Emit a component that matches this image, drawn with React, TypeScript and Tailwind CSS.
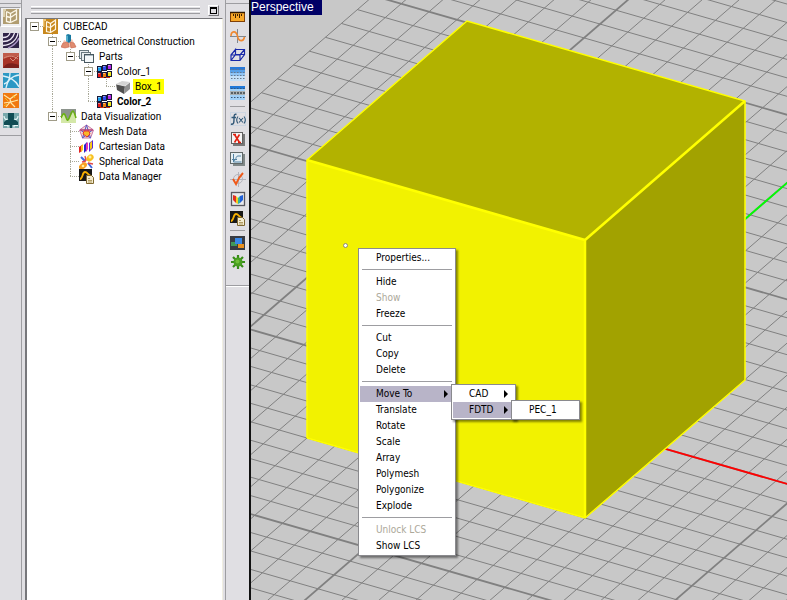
import { Fragment, type ReactNode } from 'react'
import clsx from 'clsx'

interface IconProps {
  children: ReactNode
}

function Icon({ children }: IconProps) {
  return (
    <svg className="h-4 w-4 shrink-0" viewBox="0 0 16 16" fill="none" aria-hidden="true">
      {children}
    </svg>
  )
}

/* ---------- tree icons ---------- */

const ProjectIcon = () => (
  <Icon>
    <rect x="0" y="0" width="15" height="15" fill="#c8881c" />
    <path d="M0 0h3v2H1.500v6H0z" fill="#f0c878" />
    <path d="M3.500 2.500v10l4 1M3.500 2.500l4 2 5-3.500v9.500l-5 3M3.500 7.500l4 1M7.500 4.500v9M7.500 8.500l5-4" stroke="#fff8e8" strokeWidth="1.200" />
  </Icon>
)

const GeometryIcon = () => (
  <Icon>
    <path d="M0 13l3-7 4 2 4-3 4 8-4 1-4-1-4 1z" fill="#f4c4b0" />
    <path d="M0 13l2-4 5-1 1 5-4 1zM9 8l4 1 2 4-5 1z" fill="#e08c70" stroke="#c86850" strokeWidth=".6" />
    <path d="M5 1l2-1 3 1v6L8 9 5 7z" fill="#1878a0" />
    <path d="M5 1l2 1v6L5 7z" fill="#58b0cc" />
  </Icon>
)

const PartsIcon = () => (
  <Icon>
    <rect x=".5" y="1.500" width="9" height="8" fill="#e8eef0" stroke="#68787f" />
    <rect x="2.500" y="3.500" width="9" height="8" fill="#e8eef0" stroke="#68787f" />
    <rect x="5.500" y="5.500" width="9" height="8" fill="#f4f8fa" stroke="#485860" />
    <path d="M6 6.500h8" stroke="#a8b8c0" />
  </Icon>
)

const CUBES = [
  { x: 0, y: 2, color: '#18a0f0' },
  { x: 5, y: 1, color: '#3048f0' },
  { x: 10, y: 0, color: '#b828e8' },
  { x: 0, y: 8, color: '#e81818' },
  { x: 5, y: 8, color: '#f08010' },
  { x: 10, y: 7, color: '#f0e818' },
]

const ColorIcon = () => (
  <Icon>
    {CUBES.map(c => (
      <Fragment key={`${c.x}-${c.y}`}>
        <rect x={c.x} y={c.y} width="5" height="6" fill="#181838" />
        <path d={`M${c.x + 1} ${c.y + 1}h3v4h-3z`} fill={c.color} />
        <path d={`M${c.x + 1} ${c.y + 1}h2v1h-2z`} fill="#fff" fillOpacity=".45" />
      </Fragment>
    ))}
    <path d="M3 13h4v1H3zM9 13h4v1H9z" fill="#c83010" />
  </Icon>
)

const BoxIcon = () => (
  <Icon>
    <path d="M1 5l6-3 8 1-5 4z" fill="#d4d4d4" />
    <path d="M1 5l9 2-1 8-7-4z" fill="#505050" />
    <path d="M10 7l5-4v7l-6 5z" fill="#909090" />
    <path d="M1 5l9 2 5-4" stroke="#f0f0f0" strokeWidth=".8" />
  </Icon>
)

const VisualizationIcon = () => (
  <Icon>
    <rect width="15" height="14" fill="#8c948c" />
    <path d="M0 14V7l3-3 4 7 5-8 3 4v7z" fill="#d4e8a8" />
    <path d="M0 9c2-5 3-5 4-3s2 6 3 5c2-2 3-9 5-9 1 0 2 4 3 7" stroke="#68b010" strokeWidth="1.600" />
  </Icon>
)

const MeshIcon = () => (
  <Icon>
    <path d="M7.500 1l7 5-3 8h-8l-3-8z" fill="#f8dcd4" stroke="#c878a8" />
    <path d="M7.500 1l-4 13 10-8h-12l10 8z" stroke="#5058c8" />
    <path d="M5 7h5l1 3-3 3-4-3z" fill="#f8b828" stroke="#e03030" />
    <path d="M1 6h13" stroke="#e03050" />
  </Icon>
)

const CartesianIcon = () => (
  <Icon>
    <path d="M0 8l3-2v6l-3 2z" fill="#e02020" />
    <path d="M2 7l2-2v6l-2 2z" fill="#f8c818" />
    <path d="M5 6l3-3v8l-3 3z" fill="#2828c8" />
    <path d="M7 5l2-2v7l-2 3z" fill="#e838b0" />
    <path d="M10 4l4-3v8l-4 4z" fill="#5828d8" />
    <path d="M11 4l2-2v7l-2 2z" fill="#f8c818" />
  </Icon>
)

const SphericalIcon = () => (
  <Icon>
    <ellipse cx="11" cy="4" rx="4" ry="3" transform="rotate(-40 11 4)" fill="#f8c020" />
    <ellipse cx="4" cy="12" rx="4.500" ry="2.800" transform="rotate(-35 4 12)" fill="#f8a020" />
    <path d="M2 3l4 4M9 9l4 5" stroke="#4068e0" strokeWidth="2" />
    <path d="M3 8l4-1M9 9l5 1M6 2l1 5" stroke="#e04848" strokeWidth="1.300" />
    <circle cx="11" cy="3" r="1.500" fill="#fff0a0" />
    <circle cx="4" cy="12" r="1.300" fill="#fff0a0" />
  </Icon>
)

const DataManagerIcon = () => (
  <Icon>
    <rect width="13" height="12" fill="#181818" />
    <path d="M1 10c3 0 2-7 5-7s2 3 6 4" stroke="#f8b000" strokeWidth="1.800" />
    <path d="M7.500 6.500h5l2 2v6h-7z" fill="#f4ecd0" stroke="#806830" />
    <path d="M9 9.500h2M9 11.500h4M9 13h4" stroke="#a08848" strokeWidth=".8" />
  </Icon>
)

/* ---------- module bar icons ---------- */

const CubeModuleIcon = () => (
  <Icon>
    <rect width="16" height="15" fill="#b09c70" />
    <path d="M0 0h3v2H2v6H0z" fill="#dcd0b0" />
    <path d="M3.500 2.500v10l4 1M3.500 2.500l4 2 6-3.500v9.500l-6 3M3.500 7.500l4 1M7.500 4.500v9M7.500 8.500l6-4" stroke="#fbf7ea" strokeWidth="1.300" />
  </Icon>
)

const WaveModuleIcon = () => (
  <Icon>
    <rect width="16" height="15" fill="#302448" />
    <path d="M0 4.500c3 0 6-1.500 7-4.500M0 8.500c6 0 10-3 11.500-8.500M0 12.500C8 12 14 7 15 0" stroke="#ece6f4" strokeWidth="1.300" />
    <path d="M5 15c5-2 9-5 11-10" stroke="#a894c4" strokeWidth="1.500" />
  </Icon>
)

const RedModuleIcon = () => (
  <Icon>
    <rect width="16" height="15" fill="#a83428" />
    <path d="M0 0h16v4L9 3 0 6z" fill="#c05c4c" />
    <path d="M1 5c5-3 10-2 14 1M7 5l3 3 5-5" stroke="#d88c7c" />
    <path d="M0 15c3-5 7-6 16-3v3z" fill="#7c201c" />
  </Icon>
)

const BlueModuleIcon = () => (
  <Icon>
    <rect width="16" height="15" fill="#2c98c4" />
    <path d="M0 3c8 1 13 5 16 11M3 15C4 8 9 3 16 2M1 11c4-1 6-5 6-11" stroke="#dcf2fa" strokeWidth="1.300" />
  </Icon>
)

const OrangeModuleIcon = () => (
  <Icon>
    <rect width="16" height="15" fill="#f07810" />
    <path d="M1 2l6 4 1 4 4 4M7 6l7-5M8 9l7-2M1 10l6-1-4 5" stroke="#ffe8a8" strokeWidth="1.200" />
    <path d="M2 5l3 3M10 2l2 3M1 13l3-2" stroke="#f8c020" />
  </Icon>
)

const TealModuleIcon = () => (
  <Icon>
    <rect width="16" height="15" fill="#78a8ac" />
    <path d="M5 0h6v6l4 3v3H1V9l4-3z" fill="#104c54" />
    <path d="M1 3c0 3 2 4 4 3M15 3c0 3-2 4-4 3M1 12.500h4v2M15 12.500h-4v2" stroke="#e8f8f8" strokeWidth="1.200" />
    <path d="M7 11h2v4H7z" fill="#104c54" />
  </Icon>
)

/* ---------- view bar icons ---------- */

const RulerIcon = () => (
  <Icon>
    <rect x=".5" y="3.500" width="14" height="9" fill="#f8a828" stroke="#804008" />
    <path d="M0 3.500h15" stroke="#301800" strokeWidth="1.500" />
    <path d="M3.500 5v2M5.500 5v4M7.500 5v2M9.500 5v4M11.500 5v2" stroke="#402000" />
  </Icon>
)

const CurveIcon = () => (
  <Icon>
    <path d="M0 8.500h16M7.500 1v14" stroke="#808890" />
    <path d="M1 8c0-5 5-6 6.500 0 1 6 6 6 7 1" stroke="#f08830" strokeWidth="1.600" />
  </Icon>
)

const WireBoxIcon = () => (
  <Icon>
    <path d="M1 8h9v5.500H1zM5.500 2.500h9v5L10 13.500M1 8l4.500-5.500v5L1 13.500M10 8l4.500-5.500M5.500 7.500h9" stroke="#1828a8" strokeWidth="1.200" />
  </Icon>
)

const GridIcon = () => (
  <Icon>
    <rect y="1" width="15" height="14" fill="#c4e0f8" />
    <rect y="1" width="15" height="3" fill="#2878d8" />
    <rect y="4" width="15" height="3" fill="#58a0e8" />
    <rect y="7" width="15" height="3" fill="#90c4f4" />
    <path d="M1 3.500h14M1 6.500h14M1 9.500h14M1 12.500h14" stroke="#68788c" strokeDasharray="1.500 1.500" />
  </Icon>
)

const GridRowIcon = () => (
  <Icon>
    <rect y="1" width="15" height="14" fill="#a0d0f8" />
    <rect y="1" width="15" height="3" fill="#2078d8" />
    <path d="M1 3.500h14M1 12.500h14" stroke="#385878" strokeDasharray="1.500 1.500" />
    <rect y="6" width="15" height="4" fill="#a8b0b4" />
    <path d="M1 8h14" stroke="#586064" strokeWidth="2" strokeDasharray="2 1" />
  </Icon>
)

const FunctionIcon = () => (
  <Icon>
    <rect x=".5" y="1.500" width="15" height="13" stroke="#b8cce0" strokeDasharray="1 1" />
    <path d="M6.500 3.500C4 2.500 4 5 4 8s0 6-3 5M1.500 6.500h4.500" stroke="#305878" strokeWidth="1.400" />
    <path d="M8 5.500c-1.500 2-1.500 5 0 7M14 5.500c1.500 2 1.500 5 0 7M9 7l4 4.500M13 7l-4 4.500" stroke="#305878" strokeWidth="1.100" />
  </Icon>
)

const VariableIcon = () => (
  <Icon>
    <path d="M3 3h12v12H3z" fill="#787878" />
    <rect x="1.500" y="1.500" width="11" height="11" fill="#f4f4f4" stroke="#606060" />
    <path d="M4.500 3.500l5 8M9.500 3.500l-5 8M3 3.500h3M8 11.500h3" stroke="#e02010" strokeWidth="1.600" />
  </Icon>
)

const PlotIcon = () => (
  <Icon>
    <path d="M3 3h12v12H3z" fill="#808888" />
    <rect x=".5" y="1.500" width="12" height="11" fill="#e4eef4" stroke="#606868" />
    <path d="M3.500 3v8h8M3 10c4 0 2-5 5-5h3M2 8.500h5" stroke="#5080a0" />
  </Icon>
)

const CheckIcon = () => (
  <Icon>
    <circle cx="8" cy="8" r="4.500" stroke="#b4b4bc" />
    <path d="M0 8.500h16M8.500 1v15" stroke="#b4b4bc" />
    <path d="M3 8l3 5c2-5 4-8 7-11" stroke="#f05818" strokeWidth="2" />
  </Icon>
)

const SurfaceIcon = () => (
  <Icon>
    <rect x="1.500" y="1.500" width="13" height="13" fill="#e8e8ec" stroke="#585860" strokeWidth="1.300" />
    <path d="M3 4l3 1v7l-3-3z" fill="#e03020" />
    <path d="M6 5l2 2v6l-2-1z" fill="#f0d020" />
    <path d="M8 7l2-2v7l-2 1z" fill="#30b0a0" />
    <path d="M10 5l3-1v5l-3 3z" fill="#2060d8" />
  </Icon>
)

const LayersIcon = () => (
  <Icon>
    <rect x="0" y="1" width="15" height="14" fill="#383c44" />
    <rect x="1" y="7" width="6" height="4" fill="#409858" />
    <rect x="5" y="3" width="7" height="6" fill="#3888e8" />
    <rect x="8" y="9" width="6" height="4" fill="#e89020" />
  </Icon>
)

const BurstIcon = () => (
  <Icon>
    <path d="M8 1v14M1 8h14M3 3l10 10M13 3L3 13" stroke="#388c18" strokeWidth="2.200" />
    <circle cx="8" cy="8" r="4.500" fill="#48a020" />
    <circle cx="7.500" cy="7.500" r="2" fill="#70c038" />
  </Icon>
)

/* ---------- toolbars ---------- */

interface Tool {
  label: string
  icon: ReactNode
}

const MODULES: Tool[] = [
  { label: 'Wave module', icon: <WaveModuleIcon /> },
  { label: 'Illumination module', icon: <RedModuleIcon /> },
  { label: 'Field module', icon: <BlueModuleIcon /> },
  { label: 'Propagation module', icon: <OrangeModuleIcon /> },
  { label: 'Planar module', icon: <TealModuleIcon /> },
]

const VIEW_TOOLS: Tool[] = [
  { label: 'Measure', icon: <RulerIcon /> },
  { label: 'Curve', icon: <CurveIcon /> },
  { label: 'Wireframe', icon: <WireBoxIcon /> },
  { label: 'Grid', icon: <GridIcon /> },
  { label: 'Grid rows', icon: <GridRowIcon /> },
]

const DATA_TOOLS: Tool[] = [
  { label: 'Functions', icon: <FunctionIcon /> },
  { label: 'Variables', icon: <VariableIcon /> },
  { label: 'Plots', icon: <PlotIcon /> },
  { label: 'Validate', icon: <CheckIcon /> },
  { label: 'Surface', icon: <SurfaceIcon /> },
  { label: 'Data manager', icon: <DataManagerIcon /> },
]

const EXTRA_TOOLS: Tool[] = [
  { label: 'Layers', icon: <LayersIcon /> },
  { label: 'Simulate', icon: <BurstIcon /> },
]

function ToolGroup({ tools, tall }: { tools: Tool[]; tall?: boolean }) {
  return (
    <>
      {tools.map(tool => (
        <button
          key={tool.label}
          aria-label={tool.label}
          className={clsx('flex w-full items-center justify-center', tall ? 'h-5' : 'h-[19px]')}
        >
          {tool.icon}
        </button>
      ))}
    </>
  )
}

function ModuleBar() {
  return (
    <div className="flex w-[22px] shrink-0 flex-col border-r border-[#9d9da1] bg-[#e0dfe3]">
      <div className="flex flex-col border-b border-[#9d9da1] pb-1">
        <div className="mt-[3px] mb-[3px] h-px bg-[#9d9da1]" />
        <button
          aria-label="CAD module"
          className="flex h-5 w-full items-center justify-center border border-[#9d9da1] border-r-white border-b-white bg-[#efeff1]"
        >
          <CubeModuleIcon />
        </button>
        <div className="h-1" />
        <ToolGroup tools={MODULES} tall />
      </div>
    </div>
  )
}

function ViewBar() {
  return (
    <div className="flex w-7 shrink-0 flex-col border-r-2 border-[#111] bg-[#e0dfe3] pl-0.5">
      <div className="flex grow flex-col border-l border-[#9d9da1]">
        <div className="mt-[3px] mb-[3px] h-px bg-[#9d9da1]" />
        <ToolGroup tools={VIEW_TOOLS} />
        <div className="mx-1 mt-1 mb-0.5 h-px bg-[#9d9da1]" />
        <ToolGroup tools={DATA_TOOLS} tall />
        <div className="mx-1 mt-px mb-0.5 h-px bg-[#9d9da1]" />
        <ToolGroup tools={EXTRA_TOOLS} />
        <div className="mt-3.5 h-0.5 border-t border-b border-t-[#9d9da1] border-b-white" />
      </div>
    </div>
  )
}

/* ---------- project tree ---------- */

interface TreeRow {
  label: string
  // one letter per column: n = empty, l = line, t = tee, e = end, upper case = with expander, R = root
  guides: string
  icon: ReactNode
  bold?: boolean
  selected?: boolean
}

const ROWS: TreeRow[] = [
  { label: 'CUBECAD', guides: 'R', icon: <ProjectIcon /> },
  { label: 'Geometrical Construction', guides: 'nT', icon: <GeometryIcon /> },
  { label: 'Parts', guides: 'nlE', icon: <PartsIcon /> },
  { label: 'Color_1', guides: 'nlnT', icon: <ColorIcon /> },
  { label: 'Box_1', guides: 'nlnle', icon: <BoxIcon />, selected: true },
  { label: 'Color_2', guides: 'nlne', icon: <ColorIcon />, bold: true },
  { label: 'Data Visualization', guides: 'nE', icon: <VisualizationIcon /> },
  { label: 'Mesh Data', guides: 'nnt', icon: <MeshIcon /> },
  { label: 'Cartesian Data', guides: 'nnt', icon: <CartesianIcon /> },
  { label: 'Spherical Data', guides: 'nnt', icon: <SphericalIcon /> },
  { label: 'Data Manager', guides: 'nne', icon: <DataManagerIcon /> },
]

function Guide({ kind, first, label }: { kind: string; first: boolean; label: string }) {
  const expander = kind === kind.toUpperCase()
  const k = kind.toLowerCase()
  const drawing = (
    <svg
      className={clsx('block h-[15px]', first ? 'w-4' : 'w-[18px]')}
      viewBox={first ? '2 0 16 15' : '0 0 18 15'}
      fill="none"
      aria-hidden="true"
    >
      <g stroke="#a8a898" strokeDasharray="1 1">
        {(k === 'l' || k === 't') && <path d="M9.500 0v15" />}
        {k === 'e' && <path d="M9.500 0v8" />}
        {k !== 'l' && k !== 'n' && <path d="M9 7.500h9" />}
      </g>
      {expander && (
        <>
          <rect x="5.500" y="3.500" width="8" height="8" fill="#fff" stroke="#a09c88" />
          <path d="M7 7.500h5" stroke="#000" />
        </>
      )}
    </svg>
  )
  if (!expander) return drawing
  return <button aria-label={`Collapse ${label}`}>{drawing}</button>
}

function ProjectPanel() {
  return (
    <div className="flex w-[201px] shrink-0 flex-col bg-[#e0dfe3] pl-[3px]">
      <div className="flex h-[18px] items-center gap-2 pt-0.5 pr-1 pl-1.5">
        <div className="flex grow flex-col gap-0.5">
          <div className="h-[3px] border-t border-b border-t-white border-b-[#9d9da1]" />
          <div className="h-[3px] border-t border-b border-t-white border-b-[#9d9da1]" />
        </div>
        <button
          aria-label="Float panel"
          className="flex h-[11px] w-[11px] items-center justify-center border border-white border-r-[#77777b] border-b-[#77777b]"
        >
          <span className="h-[7px] w-[7px] border border-t-2 border-black" />
        </button>
      </div>
      <ul className="grow border-t border-r border-l-2 border-t-[#77777b] border-r-[#f1efe2] border-l-[#77777b] bg-white">
        {ROWS.map(row => (
          <li key={row.label} className="flex h-[15px] items-center">
            {row.guides.split('').map((kind, i) => (
              <Guide key={i} kind={kind} first={i === 0} label={row.label} />
            ))}
            {row.icon}
            <button
              className={clsx(
                "ml-0.5 h-[15px] px-0.5 font-['Roboto',sans-serif] text-[10px] leading-[15px] whitespace-nowrap",
                row.bold && 'font-bold',
                row.selected && 'bg-[#ffff00]'
              )}
            >
              {row.label}
            </button>
          </li>
        ))}
      </ul>
    </div>
  )
}

/* ---------- 3D viewport ---------- */

// front bottom corner of the cube and the two floor directions, one grid cell each
const CORNER = { x: 334, y: 518 }
const CELL_A = { x: 27.8, y: 8 }
const CELL_B = { x: 16, y: -13.85 }

function floor(a: number, b: number) {
  return {
    x: CORNER.x + a * CELL_A.x + b * CELL_B.x,
    y: CORNER.y + a * CELL_A.y + b * CELL_B.y,
  }
}

function segment(a1: number, b1: number, a2: number, b2: number) {
  const p = floor(a1, b1)
  const q = floor(a2, b2)
  return `M${p.x} ${p.y}L${q.x} ${q.y}`
}

const range = (from: number, to: number) => Array.from({ length: to - from + 1 }, (_, i) => from + i)
const isMajor = (i: number) => (i + 5) % 10 === 0

function Scene() {
  const alongA = range(-40, 70)
  const alongB = range(-22, 60)
  return (
    <svg className="absolute inset-0 h-full w-full" fill="none" role="img" aria-label="Cube on a grid">
      <g stroke="#808080">
        {alongA.map(b => (
          <path key={`a${b}`} d={segment(-22, b, 60, b)} strokeWidth={isMajor(b) ? 1.8 : 1} />
        ))}
        {alongB.map(a => (
          <path key={`b${a}`} d={segment(a, -40, a, 70)} strokeWidth={isMajor(a) ? 1.8 : 1} />
        ))}
      </g>
      <path d={segment(-5, 5, 60, 5)} stroke="#ff0000" strokeWidth="1.800" />
      <path d={segment(-5, 5, -5, 70)} stroke="#00ff00" strokeWidth="1.800" />
      <path d="M56 160L334 240V518L56 438z" fill="#f2f200" />
      <path d="M56 160L216 21L494 101L334 240z" fill="#b2b200" />
      <path d="M334 240L494 101V380L334 518z" fill="#a2a200" />
      <path d="M56 438V160L216 21L494 101V380L334 518L56 438" stroke="#ffff00" strokeWidth="1.500" />
      <path d="M56 160L334 240L494 101M334 240V518" stroke="#ffff00" strokeWidth="2.500" />
      <circle cx="94.500" cy="245.500" r="2" fill="#fff" stroke="#8c8c70" />
    </svg>
  )
}

/* ---------- context menu ---------- */

interface MenuEntry {
  label: string
  disabled?: boolean
  active?: boolean
  submenu?: boolean
}

const MENU: MenuEntry[][] = [
  [{ label: 'Properties...' }],
  [{ label: 'Hide' }, { label: 'Show', disabled: true }, { label: 'Freeze' }],
  [{ label: 'Cut' }, { label: 'Copy' }, { label: 'Delete' }],
  [
    { label: 'Move To', active: true, submenu: true },
    { label: 'Translate' },
    { label: 'Rotate' },
    { label: 'Scale' },
    { label: 'Array' },
    { label: 'Polymesh' },
    { label: 'Polygonize' },
    { label: 'Explode' },
  ],
  [{ label: 'Unlock LCS', disabled: true }, { label: 'Show LCS' }],
]

interface MenuProps {
  groups: MenuEntry[][]
  className: string
}

function Menu({ groups, className }: MenuProps) {
  return (
    <div
      role="menu"
      className={clsx(
        'absolute border border-[#8a8a8e] bg-white p-px shadow-[2px_2px_2px_rgba(0,0,0,0.45)]',
        className
      )}
    >
      {groups.map((entries, i) => (
        <Fragment key={i}>
          {i > 0 && <div className="mx-0.5 mt-[3px] mb-1 h-px bg-[#9d9da1]" />}
          {entries.map(entry => (
            <button
              key={entry.label}
              role="menuitem"
              disabled={entry.disabled}
              className={clsx(
                "flex h-4 w-full items-center justify-between pr-1.5 pl-4 font-['DejaVu_Sans_Condensed','DejaVu_Sans',sans-serif] text-[10px] leading-4 whitespace-nowrap",
                entry.active && 'bg-[#b8b4c8]',
                entry.disabled ? 'text-[#aca899]' : 'text-black'
              )}
            >
              {entry.label}
              {entry.submenu && (
                <svg className="h-2 w-1" viewBox="0 0 4 8" aria-hidden="true">
                  <path d="M0 0l4 4-4 4z" fill="#000" />
                </svg>
              )}
            </button>
          ))}
        </Fragment>
      ))}
    </div>
  )
}

function Viewport() {
  return (
    <main className="relative grow overflow-hidden bg-[#c8c8c8]">
      <Scene />
      <h1 className="relative w-fit bg-[#000066] pr-2 font-['Liberation_Sans',sans-serif] text-[12px] leading-[15px] text-white">
        Perspective
      </h1>
      <Menu groups={MENU} className="top-[248px] left-[107px] w-[98px]" />
      <Menu
        groups={[[{ label: 'CAD', submenu: true }, { label: 'FDTD', submenu: true, active: true }]]}
        className="top-[384px] left-[200px] w-[65px]"
      />
      <Menu groups={[[{ label: 'PEC_1' }]]} className="top-[400px] left-[260px] w-[69px]" />
    </main>
  )
}

export default function App() {
  return (
    <div className="flex h-screen w-full overflow-hidden bg-[#e0dfe3] text-black">
      <ModuleBar />
      <ProjectPanel />
      <ViewBar />
      <Viewport />
    </div>
  )
}
